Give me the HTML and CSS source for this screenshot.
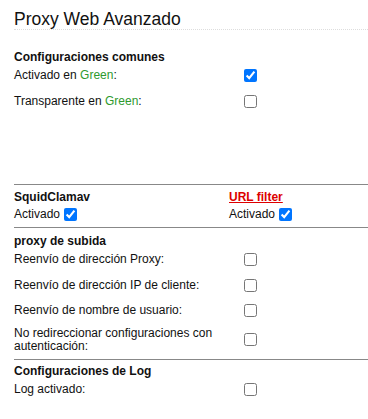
FILE: index.html
```html
<html>

<head>
  <meta name="viewport" content="width=device-width, initial-scale=1">
  <link rel="stylesheet" href="styles.css">
</head>

<body>
  <h2 class="page_title">Proxy Web Avanzado</h2>

  <!-- Common settings -->
  <section class="block common">
    <p class="block_title">Configuraciones comunes</p>
    <div class="row">
      <label>Activado en <span class="green">Green</span>:</label>
      <input type="checkbox" checked>
    </div>
    <div class="row">
      <label>Transparente en <span class="green">Green</span>:</label>
      <input type="checkbox">
    </div>
  </section>

  <!-- Filters -->
  <section class="block filters">
    <div class="filter">
      <p class="block_title">SquidClamav</p>
      <label>Activado <input type="checkbox" checked></label>
    </div>
    <div class="filter">
      <p class="block_title"><a href="#">URL filter</a></p>
      <label>Activado <input type="checkbox" checked></label>
    </div>
  </section>

  <!-- Upstream proxy -->
  <section class="block sep upstream">
    <p class="block_title">proxy de subida</p>
    <div class="row">
      <label>Reenvío de dirección Proxy:</label>
      <input type="checkbox">
    </div>
    <div class="row">
      <label>Reenvío de dirección IP de cliente:</label>
      <input type="checkbox">
    </div>
    <div class="row">
      <label>Reenvío de nombre de usuario:</label>
      <input type="checkbox">
    </div>
    <div class="row">
      <label>No redireccionar configuraciones con autenticación:</label>
      <input type="checkbox">
    </div>
  </section>

  <!-- Log settings -->
  <section class="block sep log">
    <p class="block_title">Configuraciones de Log</p>
    <div class="row">
      <label>Log activado:</label>
      <input type="checkbox">
    </div>
  </section>
</body>

</html>
```

FILE: styles.css
```css
body {
  margin: 0;
  padding: 0 0 0 14px;
  font-family: 'Liberation Sans', Arial, sans-serif;
  font-size: 12px;
  color: #111;
  background: #fff;
}

.page_title {
  margin: 0;
  padding: 9px 0 0;
  font-size: 17.5px;
  font-weight: normal;
  line-height: 20px;
  border-bottom: 1px dotted #ddd;
}

.block_title {
  margin: 0;
  font-weight: bold;
  line-height: 12px;
}

.common {
  padding-top: 21px;
}

.row {
  display: grid;
  grid-template-columns: 226px auto;
  align-items: center;
  min-height: 19.5px;
  padding: 3px 0;
}

.row label {
  line-height: 13px;
}

input[type=checkbox] {
  margin: 0 0 0 4px;
  width: 13px;
  height: 13px;
}

.filters {
  display: grid;
  grid-template-columns: 215px auto;
  margin-top: 70px;
  padding: 5px 0;
  border-top: 1px solid #888;
}

.filters .block_title {
  line-height: 14px;
}

.filter label {
  display: inline-flex;
  align-items: center;
  gap: 4px;
  margin-top: 2px;
  line-height: 16px;
}

.filter input[type=checkbox] {
  margin: 0;
}

.filter a {
  color: #dd0000;
}

.green {
  color: #2e9a2e;
}

.sep {
  border-top: 1px solid #888;
}

.upstream {
  padding-top: 7px;
}

.log {
  margin-top: 3px;
  padding-top: 5px;
}
```
